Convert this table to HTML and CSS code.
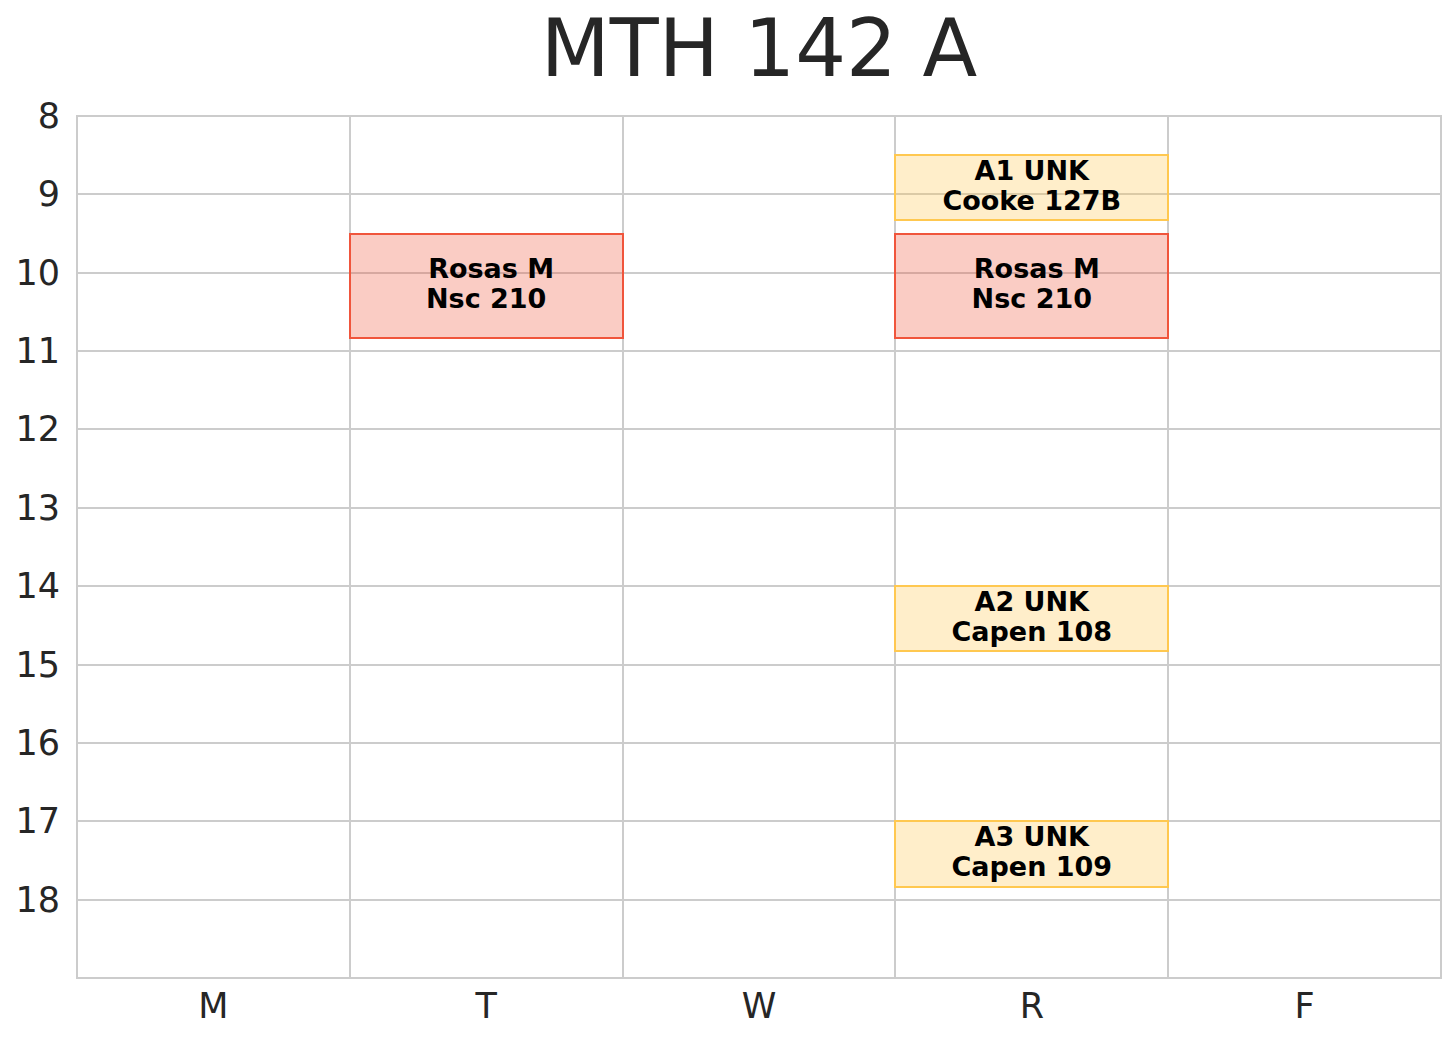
FILE: index.html
```html
<!DOCTYPE html>
<html lang="en">
<head>
<meta charset="utf-8">
<title>MTH 142 A</title>
<link rel="stylesheet" href="styles.css">
</head>
<body>
<div class="figure">
  <h1 class="title">MTH 142 A</h1>

  <div class="yaxis">
    <div class="ytick">8</div>
    <div class="ytick">9</div>
    <div class="ytick">10</div>
    <div class="ytick">11</div>
    <div class="ytick">12</div>
    <div class="ytick">13</div>
    <div class="ytick">14</div>
    <div class="ytick">15</div>
    <div class="ytick">16</div>
    <div class="ytick">17</div>
    <div class="ytick">18</div>
  </div>

  <div class="plot">
    <div class="day">
      <div class="hour"></div><div class="hour"></div><div class="hour"></div><div class="hour"></div><div class="hour"></div><div class="hour"></div><div class="hour"></div><div class="hour"></div><div class="hour"></div><div class="hour"></div><div class="hour"></div>
    </div>
    <div class="day">
      <div class="hour"></div><div class="hour"></div><div class="hour"></div><div class="hour"></div><div class="hour"></div><div class="hour"></div><div class="hour"></div><div class="hour"></div><div class="hour"></div><div class="hour"></div><div class="hour"></div>
      <div class="event lecture" style="--start:9.5;--end:10.8333">
        <span class="line shifted">Rosas M</span>
        <span class="line">Nsc 210</span>
      </div>
    </div>
    <div class="day">
      <div class="hour"></div><div class="hour"></div><div class="hour"></div><div class="hour"></div><div class="hour"></div><div class="hour"></div><div class="hour"></div><div class="hour"></div><div class="hour"></div><div class="hour"></div><div class="hour"></div>
    </div>
    <div class="day">
      <div class="hour"></div><div class="hour"></div><div class="hour"></div><div class="hour"></div><div class="hour"></div><div class="hour"></div><div class="hour"></div><div class="hour"></div><div class="hour"></div><div class="hour"></div><div class="hour"></div>
      <div class="event recitation" style="--start:8.5;--end:9.3333">
        <span class="line">A1 UNK</span>
        <span class="line">Cooke 127B</span>
      </div>
      <div class="event lecture" style="--start:9.5;--end:10.8333">
        <span class="line shifted">Rosas M</span>
        <span class="line">Nsc 210</span>
      </div>
      <div class="event recitation" style="--start:14;--end:14.8333">
        <span class="line">A2 UNK</span>
        <span class="line">Capen 108</span>
      </div>
      <div class="event recitation" style="--start:17;--end:17.8333">
        <span class="line">A3 UNK</span>
        <span class="line">Capen 109</span>
      </div>
    </div>
    <div class="day">
      <div class="hour"></div><div class="hour"></div><div class="hour"></div><div class="hour"></div><div class="hour"></div><div class="hour"></div><div class="hour"></div><div class="hour"></div><div class="hour"></div><div class="hour"></div><div class="hour"></div>
    </div>
  </div>

  <div class="xaxis">
    <div class="xtick">M</div>
    <div class="xtick">T</div>
    <div class="xtick">W</div>
    <div class="xtick">R</div>
    <div class="xtick">F</div>
  </div>
</div>
</body>
</html>
```

FILE: styles.css
```css
html, body {
  margin: 0;
  padding: 0;
  background: #ffffff;
}

body {
  font-family: "DejaVu Sans", "Liberation Sans", sans-serif;
  color: #262626;
}

.figure {
  width: 1456px;
  height: 1040px;
  display: grid;
  grid-template-columns: 76px 1366px;
  grid-template-rows: auto auto auto;
  align-content: start;
  align-items: start;
}

.title {
  grid-column: 2;
  grid-row: 1;
  margin: 2px 0 20px;
  font-size: 80px;
  font-weight: normal;
  line-height: 93px;
  text-align: center;
  color: #262626;
}

.yaxis {
  grid-column: 1;
  grid-row: 2;
  margin-top: -38.18px;
  display: flex;
  flex-direction: column;
}

.ytick {
  height: 78.36px;
  display: flex;
  align-items: center;
  justify-content: flex-end;
  padding-right: 16px;
  font-size: 35px;
}

.plot {
  grid-column: 2;
  grid-row: 2;
  box-sizing: border-box;
  width: 1366px;
  height: 864px;
  border: 2px solid #cccccc;
  background: #cccccc;
  display: grid;
  grid-template-columns: repeat(5, 1fr);
  gap: 2px;
}

.day {
  position: relative;
  display: grid;
  grid-template-rows: repeat(11, 1fr);
  row-gap: 2px;
  background: #cccccc;
}

.hour {
  background: #ffffff;
}

.event {
  position: absolute;
  left: -2px;
  right: -2px;
  top: calc((var(--start) - 8) * 78.36px - 2px);
  height: calc((var(--end) - var(--start)) * 78.36px + 2px);
  box-sizing: border-box;
  border: 2px solid;
  display: flex;
  flex-direction: column;
  align-items: center;
  justify-content: center;
  padding-bottom: 4px;
  font-size: 27px;
  font-weight: bold;
  line-height: 30px;
  color: #000000;
}

.event.lecture {
  border-color: rgb(240, 85, 60);
  background: rgba(240, 85, 60, 0.3);
}

.event.recitation {
  border-color: rgb(255, 200, 80);
  background: rgba(255, 200, 80, 0.3);
}

.line {
  display: block;
  white-space: nowrap;
}

.line.shifted {
  padding-left: 10px;
}

.xaxis {
  grid-column: 2;
  grid-row: 3;
  display: grid;
  grid-template-columns: repeat(5, 1fr);
  gap: 2px;
  padding: 0 2px;
  margin-top: 6px;
}

.xtick {
  text-align: center;
  font-size: 35px;
  line-height: 42px;
}
```
